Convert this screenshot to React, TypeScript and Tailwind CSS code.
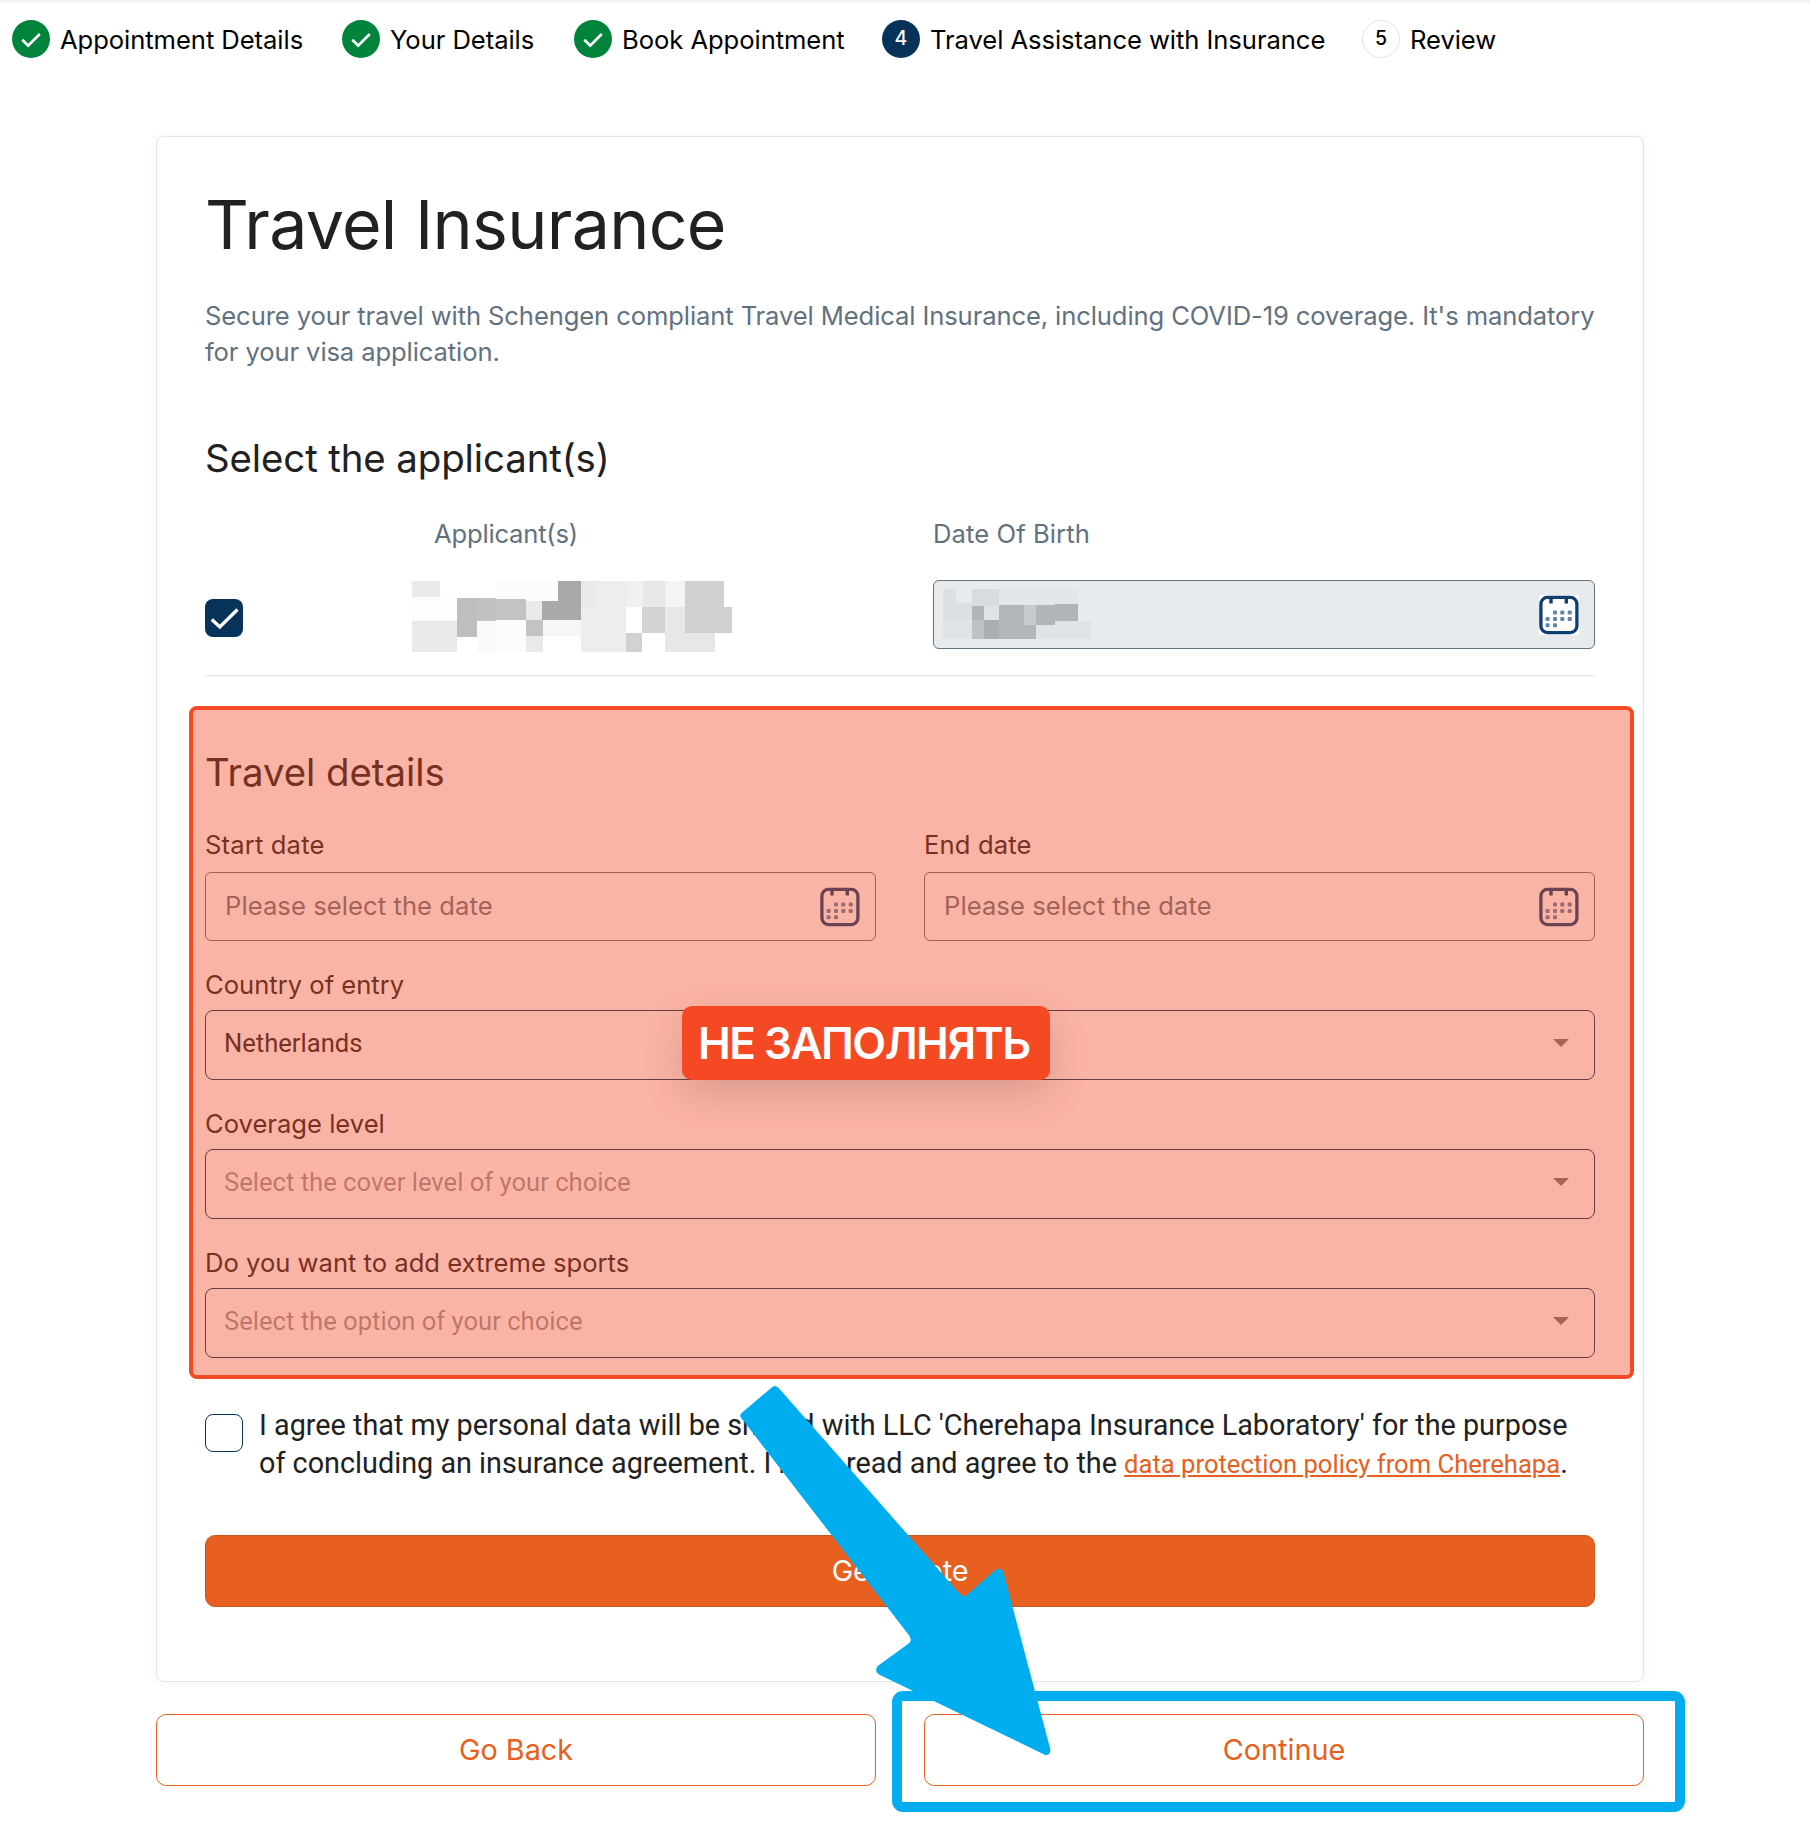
import type { ReactNode } from "react";

type Cell = [x: number, y: number, w: number, h: number, fill: string];

const nameCells: Cell[] = [
  [0, 0, 28, 16, "#e9e9e9"],
  [84, 0, 62, 20, "#fcfcfc"],
  [146, 0, 23, 39, "#a8a9ab"],
  [0, 16, 45, 24, "#fdfdfd"],
  [45, 17, 20, 39, "#bdbec0"],
  [65, 17, 19, 23, "#c0c1c3"],
  [84, 18, 30, 21, "#c2c3c5"],
  [114, 20, 16, 19, "#e9e9e9"],
  [130, 20, 39, 19, "#a8a9ab"],
  [0, 40, 45, 31, "#e9e9e9"],
  [65, 40, 19, 31, "#fafafa"],
  [84, 39, 30, 32, "#fcfcfc"],
  [114, 39, 17, 16, "#c2c3c5"],
  [131, 39, 38, 16, "#f5f7f6"],
  [114, 55, 17, 16, "#e9e9e9"],
  [169, 0, 16, 26, "#e9e9e9"],
  [185, 0, 29, 26, "#ededed"],
  [169, 26, 45, 45, "#ededed"],
  [214, 0, 17, 26, "#eff1f0"],
  [231, 0, 22, 26, "#e5e8e6"],
  [253, 0, 20, 26, "#f4f4f4"],
  [273, 0, 39, 26, "#cfd0d2"],
  [230, 26, 23, 26, "#d2d2d2"],
  [253, 26, 20, 45, "#e5e8e6"],
  [273, 26, 47, 26, "#cfd0d2"],
  [214, 52, 16, 19, "#d2d2d2"],
  [273, 52, 30, 19, "#e5e8e6"],
];

const birthCells: Cell[] = [
  [0, 0, 13, 31, "#dce0e3"],
  [13, 0, 16, 14, "#e7ebee"],
  [29, 0, 27, 17, "#d8dcdf"],
  [56, 0, 79, 16, "#e3e7ea"],
  [13, 14, 16, 17, "#dce0e3"],
  [29, 17, 12, 14, "#b1b5b9"],
  [41, 17, 15, 14, "#dfe3e6"],
  [56, 16, 25, 34, "#b3b6bb"],
  [81, 16, 12, 20, "#c6c9cd"],
  [93, 16, 19, 20, "#b1b4b9"],
  [112, 15, 23, 17, "#b1b4b9"],
  [0, 31, 29, 19, "#e0e4e7"],
  [29, 31, 12, 19, "#bdc1c5"],
  [41, 31, 15, 19, "#abafb3"],
  [81, 36, 12, 14, "#b3b6bb"],
  [93, 36, 19, 14, "#e0e4e7"],
  [112, 32, 36, 18, "#e0e4e7"],
];

function Mosaic({ cells, width, height }: { cells: Cell[]; width: number; height: number }) {
  return (
    <svg width={width} height={height} shapeRendering="crispEdges" aria-hidden="true">
      {cells.map(([x, y, w, h, fill], i) => (
        <rect key={i} x={x} y={y} width={w} height={h} fill={fill} />
      ))}
    </svg>
  );
}

const dots = [
  [16, 17.5], [23.3, 17.5], [30.7, 17.5],
  [8.6, 24], [16, 24], [23.3, 24], [30.7, 24],
  [8.6, 30.2], [16, 30.2],
];

function CalendarIcon() {
  return (
    <svg width="40" height="40" viewBox="0 0 40 40" className="shrink-0 bg-white" aria-hidden="true">
      <rect x="1.9" y="2.4" width="36" height="35.2" rx="6.5" fill="none" stroke="#0d3f73" strokeWidth="3.3" />
      <path d="M12 2.5V8.5M27.3 2.5V8.5" stroke="#0d3f73" strokeWidth="3.4" />
      {dots.map(([x, y], i) => (
        <rect key={i} x={x - 2} y={y - 2} width="4" height="4" rx="1.2" fill="#5f84a6" />
      ))}
    </svg>
  );
}

function Check({ size, d, viewBox, strokeWidth }: { size: number; d: string; viewBox: string; strokeWidth: number }) {
  return (
    <svg width={size} height={size} viewBox={viewBox} fill="none" stroke="#fff" strokeWidth={strokeWidth} aria-hidden="true">
      <path d={d} />
    </svg>
  );
}

function Step({ width, label, state, mark }: { width: string; label: string; state: string; mark: ReactNode }) {
  return (
    <li className={`flex shrink-0 items-center gap-2.5 ${width}`}>
      <span className={`flex size-[38px] shrink-0 items-center justify-center rounded-full text-[19.5px] font-medium ${state}`}>{mark}</span>
      <span className="mt-[3px] whitespace-nowrap text-[25.6px] leading-9 tracking-[-0.06px] text-black">{label}</span>
    </li>
  );
}

const doneMark = <Check size={38} viewBox="0 0 38 38" d="M10.3 19.8L16.2 25.6L27.8 14" strokeWidth={2.7} />;

function DateField({ label }: { label: string }) {
  return (
    <div className="flex-1">
      <div className="h-9 text-[25.6px] leading-9 tracking-[0.15px]">{label}</div>
      <div className="mt-[9px] flex h-[69px] items-center justify-between rounded-md border border-[#607180] pr-[15px] pl-[19px]">
        <span className="-mt-0.5 text-[25.6px] leading-9 tracking-[0.07px] text-[#6b7682]">Please select the date</span>
        <CalendarIcon />
      </div>
    </div>
  );
}

function SelectField({ label, value, placeholder }: { label: string; value?: string; placeholder?: string }) {
  return (
    <div>
      <div className="h-9 text-[25.6px] leading-9">{label}</div>
      <div className="mt-[7px] flex h-[70px] items-center justify-between rounded-lg border border-[#08345a] pr-[25px] pl-[18px] font-['Roboto',sans-serif] text-[25.6px] leading-9">
        <span className={value ? "-mt-1" : "-mt-1 text-black/42"}>{value ?? placeholder}</span>
        <svg width="16" height="8" viewBox="0 0 16 8" className="-mt-1 fill-black/54" aria-hidden="true">
          <path d="M0 0H16L8 8Z" />
        </svg>
      </div>
    </div>
  );
}

export default function App() {
  return (
    <div className="relative flex h-[1828px] w-[1810px] flex-col overflow-hidden bg-white font-['Inter',sans-serif] text-[#212121]">
      <div className="h-1 shrink-0 bg-linear-to-b from-[#f0f0f0] to-white" />
      <ol className="mt-[15px] flex h-[39px] items-center pl-3">
        <Step width="w-[330px]" label="Appointment Details" state="bg-[#00843c]" mark={doneMark} />
        <Step width="w-[232px]" label="Your Details" state="bg-[#00843c]" mark={doneMark} />
        <Step width="w-[308px]" label="Book Appointment" state="bg-[#00843c]" mark={doneMark} />
        <Step width="w-[480px]" label="Travel Assistance with Insurance" state="bg-[#07335a] text-white" mark="4" />
        <Step width="w-[140px]" label="Review" state="border border-[#e4e4e4] text-black" mark="5" />
      </ol>

      <main className="relative mt-[78px] ml-[156px] flex h-[1546px] w-[1488px] shrink-0 flex-col rounded-lg border border-[#dfe5ec] px-12 pt-[47px] shadow-[0_0_10px_rgba(40,80,130,0.06)]">
        <h1 className="h-20 text-[68px] leading-20 tracking-[-0.7px]">Travel Insurance</h1>
        <p className="mt-[34px] text-[25.6px] leading-9 tracking-[-0.11px] whitespace-nowrap text-[#62717f]">
          Secure your travel with Schengen compliant Travel Medical Insurance, including COVID-19 coverage. It's mandatory
          <br />
          for your visa application.
        </p>

        <h2 className="mt-16 h-12 text-[38.4px] leading-12 tracking-[-0.1px]">Select the applicant(s)</h2>
        <div className="mt-[34px] flex h-9 text-[25.6px] leading-9 text-[#62717f]">
          <span className="ml-[229px] w-[499px] shrink-0 tracking-[-0.2px]">Applicant(s)</span>
          <span className="tracking-[0.08px]">Date Of Birth</span>
        </div>
        <div className="mt-7 flex h-[69px] items-start">
          <span className="mt-[19px] flex size-[38px] items-center justify-center rounded-lg bg-[#07335a]">
            <Check size={38} viewBox="0 0 38 38" d="M6.8 20.5L14.8 28L32.5 10.5" strokeWidth={3.4} />
          </span>
          <span className="mt-px ml-[169px]">
            <Mosaic cells={nameCells} width={320} height={71} />
          </span>
          <div className="ml-auto flex h-[69px] w-[662px] items-center justify-between rounded-md border border-[#607180] bg-[#e7ebee] pr-[15px] pl-[9px]">
            <span className="-mt-px">
              <Mosaic cells={birthCells} width={148} height={50} />
            </span>
            <CalendarIcon />
          </div>
        </div>
        <hr className="mt-[26px] h-px border-0 bg-[#dfe2e5]" />

        <section className="mt-[72px]">
          <h2 className="h-12 text-[38.4px] leading-12 tracking-[-0.05px]">Travel details</h2>
          <div className="mt-[31px] flex gap-12">
            <DateField label="Start date" />
            <DateField label="End date" />
          </div>
          <div className="mt-[26px] flex flex-col gap-[26px]">
            <SelectField label="Country of entry" value="Netherlands" />
            <SelectField label="Coverage level" placeholder="Select the cover level of your choice" />
            <SelectField label="Do you want to add extreme sports" placeholder="Select the option of your choice" />
          </div>
        </section>

        <div className="mt-12 flex">
          <span className="mt-2 size-[38px] shrink-0 rounded-lg border border-[#08345a]" />
          <p className="ml-4 h-[76px] font-['Roboto',sans-serif] text-[28.8px] leading-[38px] whitespace-nowrap">
            I agree that my personal data will be shared with LLC 'Cherehapa Insurance Laboratory' for the purpose
            <br />
            of concluding an insurance agreement. I have read and agree to the{" "}
            <a className="text-[25.6px] text-[#e76020] underline">data protection policy from Cherehapa</a>.
          </p>
        </div>

        <button className="mt-[53px] h-[72px] shrink-0 rounded-[10px] border border-[#c9551f] bg-[#e76020] text-[28.8px] tracking-[-0.15px] text-white">
          Get Quote
        </button>

        {/* Translucent highlight over the travel details, with its caption */}
        <div className="absolute top-[569px] left-8 h-[673px] w-[1445px] rounded-lg border-4 border-[#f54924] bg-[#f24a26]/41 bg-clip-padding" />
        <div className="absolute top-[869px] left-[525px] flex h-[74px] w-[368px] items-center rounded-[10px] bg-[#f54924] pb-px pl-4 text-[44px] font-semibold tracking-[-1.5px] whitespace-nowrap text-white shadow-[0_14px_36px_rgba(120,70,60,0.22)]">
          НЕ ЗАПОЛНЯТЬ
        </div>
      </main>

      <div className="mt-8 ml-[156px] flex h-[72px] w-[1488px] shrink-0 gap-12 text-[28.8px] text-[#e76020]">
        <button className="flex-1 rounded-[10px] border border-[#e76020]">Go Back</button>
        <button className="flex-1 rounded-[10px] border border-[#e76020]">Continue</button>
      </div>

      {/* Callout frame and arrow */}
      <div className="absolute top-[1691px] left-[892px] h-[121px] w-[793px] rounded-[11px] border-10 border-[#00aeef]" />
      <svg className="absolute top-[1360px] left-[700px]" width="400" height="440" viewBox="0 0 1200 1320" fill="#00aeef" aria-hidden="true">
        <path d="M218 80Q228 74 238 86L778 700Q791 716 804 702L886 630Q905 619 911 640L1051 1168Q1052 1188 1034 1184L540 945Q521 934 533 918L627 850Q637 842 627 826L122 172Q119 166 124 160Z" />
      </svg>
    </div>
  );
}
